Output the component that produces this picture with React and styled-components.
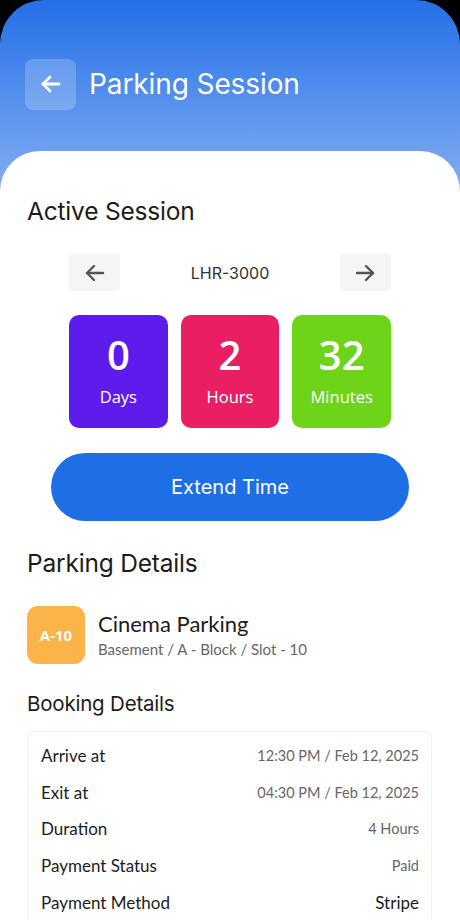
import React from "react";
import styled, { createGlobalStyle } from "styled-components";

const Global = createGlobalStyle`
  html, body { margin: 0; padding: 0; background: #000; }
  body { font-family: "Inter", "Noto Sans", sans-serif; }
  * { box-sizing: border-box; }
`;

const Screen = styled.div`
  width: 460px;
  min-height: 924px;
  border-radius: 44px 44px 0 0;
  overflow: hidden;
  background: linear-gradient(180deg, #246fe7 0%, #4c8aec 45%, #7eaaf1 100%);
  background-size: 100% 180px;
  background-repeat: no-repeat;
  background-color: #7eaaf1;
  display: flex;
  flex-direction: column;
`;

const Header = styled.header`
  height: 151px;
  display: flex;
  align-items: center;
  gap: 13px;
  padding: 17px 25px 0;
`;

const BackButton = styled.button`
  width: 51px;
  height: 51px;
  border: none;
  border-radius: 8px;
  background: rgba(255, 255, 255, 0.2);
  display: flex;
  align-items: center;
  justify-content: center;
  padding: 0;
`;

const Title = styled.h1`
  margin: 0;
  font-family: "Inter", sans-serif;
  font-weight: 400;
  font-size: 28px;
  letter-spacing: -0.1px;
  color: #fff;
`;

const Card = styled.main`
  flex: 1;
  background: #fff;
  border-radius: 40px 40px 0 0;
  padding: 46px 27px 0;
  display: flex;
  flex-direction: column;
`;

const SectionTitle = styled.h2`
  margin: 0;
  font-family: "Inter", sans-serif;
  font-weight: 400;
  font-size: ${(p) => p.$size || 24.5}px;
  color: #1c1c1c;
  letter-spacing: -0.2px;
  line-height: 1.2;
`;

const Navigator = styled.div`
  margin: 28px 42px 0;
  display: flex;
  align-items: center;
  justify-content: space-between;
`;

const NavButton = styled.button`
  width: 51px;
  height: 37px;
  border: none;
  border-radius: 4px;
  background: #f5f5f5;
  display: flex;
  align-items: center;
  justify-content: center;
  padding: 0;
`;

const Plate = styled.span`
  font-family: "Inter", sans-serif;
  font-size: 16px;
  color: #333;
`;

const Tiles = styled.div`
  margin: 24px 42px 0;
  display: grid;
  grid-template-columns: repeat(3, 1fr);
  gap: 13px;
`;

const Tile = styled.div`
  height: 113px;
  border-radius: 10px;
  background: ${(p) => p.$color};
  color: #fff;
  display: flex;
  flex-direction: column;
  align-items: center;
  padding-top: 17px;
`;

const TileValue = styled.div`
  font-family: "Open Sans", sans-serif;
  font-weight: 600;
  font-size: 40px;
  line-height: 46px;
`;

const TileLabel = styled.div`
  font-family: "Open Sans", sans-serif;
  font-weight: 500;
  font-size: 16.5px;
  line-height: 22px;
  margin-top: 8px;
`;

const ExtendButton = styled.button`
  margin: 25px 24px 0;
  height: 68px;
  border: none;
  border-radius: 34px;
  background: #1e6fe6;
  color: #fff;
  font-family: "Inter", sans-serif;
  font-weight: 400;
  font-size: 20px;
`;

const ParkingDetails = styled.div`
  margin-top: 28px;
`;

const SpotRow = styled.div`
  margin-top: 27px;
  display: flex;
  align-items: center;
  gap: 13px;
`;

const SpotBadge = styled.div`
  width: 58px;
  height: 58px;
  border-radius: 11px;
  background: #fbb44a;
  color: #fff;
  font-family: "Open Sans", sans-serif;
  font-weight: 700;
  font-size: 15px;
  display: flex;
  align-items: center;
  justify-content: center;
`;

const SpotText = styled.div`
  display: flex;
  flex-direction: column;
  gap: 3px;
  margin-top: -2px;
`;

const SpotName = styled.div`
  font-family: "Lato", sans-serif;
  font-size: 22px;
  color: #1c1c1c;
`;

const SpotSub = styled.div`
  font-family: "Lato", sans-serif;
  font-size: 15px;
  color: #666;
`;

const BookingTitleWrap = styled.div`
  margin-top: 28px;
`;

const DetailsBox = styled.div`
  margin: 15px 1px 0;
  border: 1px solid #f1f1f1;
  border-bottom: none;
  border-radius: 6px 6px 0 0;
  padding: 5px 12px 0;
  display: flex;
  flex-direction: column;
`;

const DetailRow = styled.div`
  height: 36.6px;
  display: flex;
  align-items: center;
  justify-content: space-between;
`;

const DetailLabel = styled.span`
  font-family: "Lato", sans-serif;
  font-size: 17px;
  color: #1c1c1c;
`;

const DetailValue = styled.span`
  font-family: "Lato", sans-serif;
  font-size: ${(p) => (p.$strong ? 17 : 14.5)}px;
  color: ${(p) => (p.$strong ? "#1c1c1c" : "#666")};
`;

const Arrow = ({ dir = "left", color, size, stroke }) => (
  <svg width={size} height={size} viewBox="0 0 24 24" fill="none" stroke={color} strokeWidth={stroke} strokeLinecap="round" strokeLinejoin="round">
    {dir === "left" ? (
      <>
        <path d="M20 12H4" />
        <path d="M11 5l-7 7 7 7" />
      </>
    ) : (
      <>
        <path d="M4 12h16" />
        <path d="M13 5l7 7-7 7" />
      </>
    )}
  </svg>
);

const details = [
  ["Arrive at", "12:30 PM / Feb 12, 2025"],
  ["Exit at", "04:30 PM / Feb 12, 2025"],
  ["Duration", "4 Hours"],
  ["Payment Status", "Paid"],
  ["Payment Method", "Stripe", true],
];

export default function App() {
  return (
    <>
      <Global />
      <Screen>
        <Header>
          <BackButton aria-label="Back">
            <Arrow dir="left" color="#fff" size={24} stroke={2.8} />
          </BackButton>
          <Title>Parking Session</Title>
        </Header>
        <Card>
          <SectionTitle>Active Session</SectionTitle>
          <Navigator>
            <NavButton aria-label="Previous">
              <Arrow dir="left" color="#555" size={24} stroke={2.4} />
            </NavButton>
            <Plate>LHR-3000</Plate>
            <NavButton aria-label="Next">
              <Arrow dir="right" color="#555" size={24} stroke={2.4} />
            </NavButton>
          </Navigator>
          <Tiles>
            <Tile $color="#5d1bec">
              <TileValue>0</TileValue>
              <TileLabel>Days</TileLabel>
            </Tile>
            <Tile $color="#e91e63">
              <TileValue>2</TileValue>
              <TileLabel>Hours</TileLabel>
            </Tile>
            <Tile $color="#6dd419">
              <TileValue>32</TileValue>
              <TileLabel>Minutes</TileLabel>
            </Tile>
          </Tiles>
          <ExtendButton>Extend Time</ExtendButton>
          <ParkingDetails>
            <SectionTitle>Parking Details</SectionTitle>
          </ParkingDetails>
          <SpotRow>
            <SpotBadge>A-10</SpotBadge>
            <SpotText>
              <SpotName>Cinema Parking</SpotName>
              <SpotSub>Basement / A - Block / Slot - 10</SpotSub>
            </SpotText>
          </SpotRow>
          <BookingTitleWrap>
            <SectionTitle $size={20.5}>Booking Details</SectionTitle>
          </BookingTitleWrap>
          <DetailsBox>
            {details.map(([label, value, strong]) => (
              <DetailRow key={label}>
                <DetailLabel>{label}</DetailLabel>
                <DetailValue $strong={strong}>{value}</DetailValue>
              </DetailRow>
            ))}
          </DetailsBox>
        </Card>
      </Screen>
    </>
  );
}
